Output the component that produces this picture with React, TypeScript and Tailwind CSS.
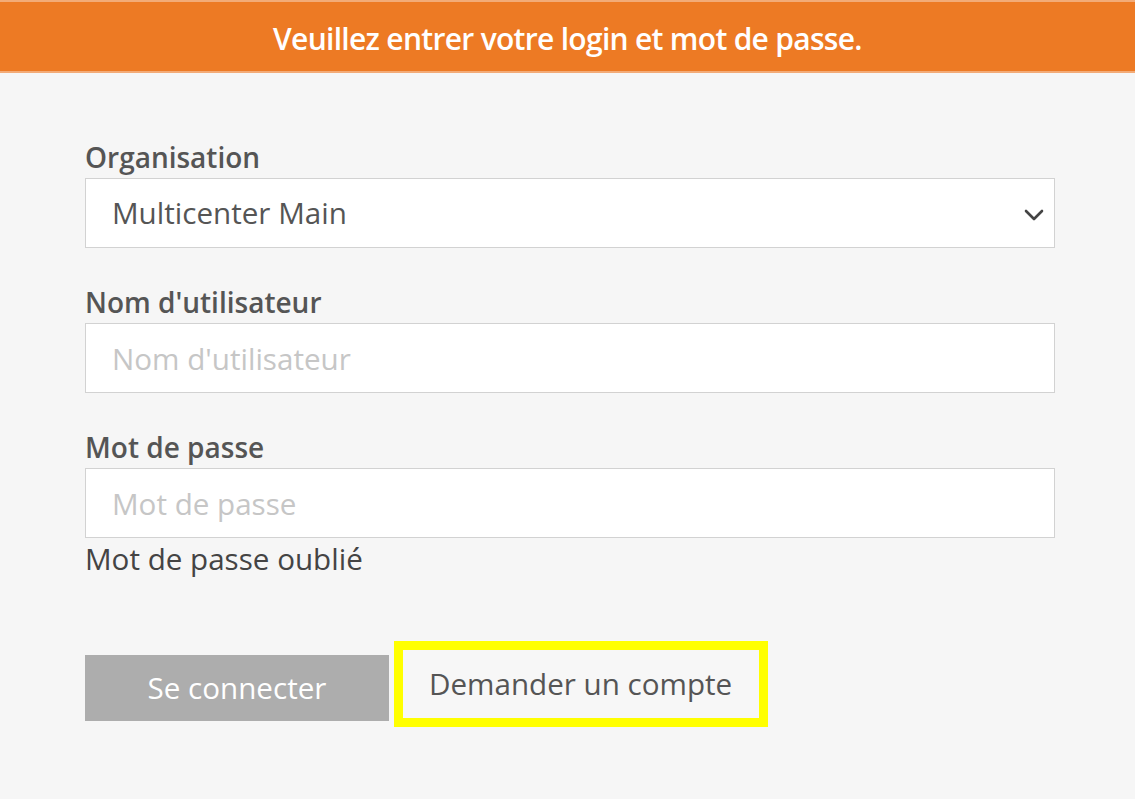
import React from "react";

function Field({ label, placeholder }: { label: string; placeholder: string }) {
  return (
    <div className="mt-[35px]">
      <div className="text-[28px] leading-[38px] font-semibold text-[#555] mb-[2px]">{label}</div>
      <input
        type="text"
        placeholder={placeholder}
        className="w-full h-[70px] bg-white border-[1.5px] border-[#d2d2d2] px-[26px] text-[29.6px] text-[#555] placeholder:text-[#c6c6c6] outline-none"
      />
    </div>
  );
}

export default function App() {
  return (
    <div className="flex w-[1138px] h-[799px] bg-white" style={{ fontFamily: '"Open Sans", "Noto Sans", sans-serif' }}>
      <div className="w-[1135px] h-full bg-[#f6f6f6] flex flex-col">
        {/* bandeau */}
        <div className="h-[73px] bg-[#ed7a24] border-t-2 border-b-2 border-[#f3ab77] flex items-center justify-center">
          <span className="text-white text-[30px] font-semibold tracking-[-0.7px] pt-[3px]">
            Veuillez entrer votre login et mot de passe.
          </span>
        </div>

        <form className="pl-[85px] w-[1055px] pt-[30px]" onSubmit={(e) => e.preventDefault()}>
          <div className="mt-[35px]">
            <div className="text-[28px] leading-[38px] font-semibold text-[#555] mb-[2px]">Organisation</div>
            <div className="relative h-[70px] bg-white border-[1.5px] border-[#d2d2d2] flex items-center px-[26px]">
              <span className="text-[29.6px] text-[#555]">Multicenter Main</span>
              <svg className="absolute right-[10px] top-[30px]" width="20" height="12" viewBox="0 0 20 12">
                <polyline points="2,2 10,10 18,2" fill="none" stroke="#444" strokeWidth="2.6" strokeLinecap="round" strokeLinejoin="round" />
              </svg>
            </div>
          </div>

          <Field label="Nom d'utilisateur" placeholder="Nom d'utilisateur" />
          <Field label="Mot de passe" placeholder="Mot de passe" />

          <div className="mt-[2px] text-[29.6px] leading-[38px] text-[#444]">Mot de passe oublié</div>

          <div className="mt-[63px] flex items-start">
            <button type="submit" className="mt-[14px] w-[304px] h-[66px] bg-[#adadad] text-white text-[29.6px]">
              Se connecter
            </button>
            <button type="button" className="ml-[5px] w-[374px] h-[86px] border-[9px] border-[#ffff00] bg-[#f7f7f7] text-left pl-[26px] text-[29.6px] text-[#555]">
              Demander un compte
            </button>
          </div>
        </form>
      </div>
    </div>
  );
}
